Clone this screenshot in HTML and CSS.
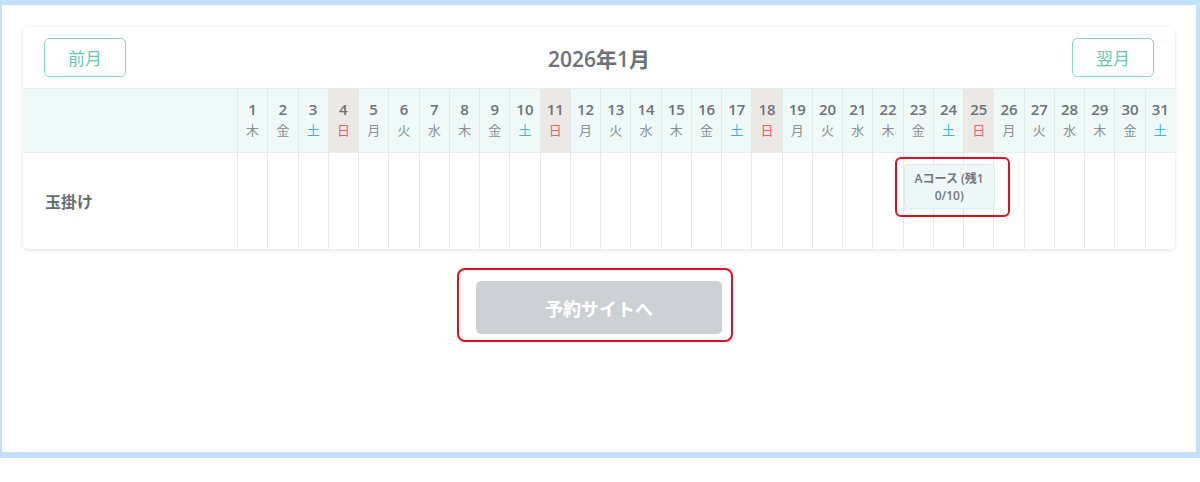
FILE: index.html
```html
<!DOCTYPE html>
<html lang="ja">
<head>
<meta charset="utf-8">
<title>カレンダー</title>
<link rel="stylesheet" href="styles.css">
</head>
<body>
<div class="frame">
  <div class="card">
    <div class="card-head">
      <button class="nav-btn">前月</button>
      <div class="title">2026年1月</div>
      <button class="nav-btn">翌月</button>
    </div>
    <div class="grid" id="grid">
      <div class="hcell label-head"></div>
    </div>
  </div>
  <div class="actions">
    <div class="btn-wrap">
      <button class="reserve-btn">予約サイトへ</button>
      <span class="mark mark-btn"></span>
    </div>
  </div>
</div>
<script>
(function(){
  var grid = document.getElementById('grid');
  var wd = ['日','月','火','水','木','金','土'];
  var first = 4; // 2026-01-01 is Thursday
  var html = '';
  for (var d = 1; d <= 31; d++) {
    var w = (first + d - 1) % 7;
    var cls = w === 0 ? ' sun' : (w === 6 ? ' sat' : '');
    html += '<div class="hcell day' + cls + '"><span class="num">' + d + '</span><span class="wd">' + wd[w] + '</span></div>';
  }
  html += '<div class="bcell label">玉掛け</div>';
  for (var d2 = 1; d2 <= 31; d2++) {
    if (d2 === 23) {
      html += '<div class="bcell slot"><div class="chip">Aコース (残1<br>0/10)</div><span class="mark mark-chip"></span></div>';
    } else {
      html += '<div class="bcell slot"></div>';
    }
  }
  grid.insertAdjacentHTML('beforeend', html);
})();
</script>
</body>
</html>
```

FILE: styles.css
```css
* { box-sizing: border-box; }
html, body { margin: 0; padding: 0; background: #ffffff; }
body {
  font-family: "Open Sans", "Noto Sans CJK JP", sans-serif;
  color: #666c70;
}
.frame {
  height: 458px;
  border-style: solid;
  border-color: #c3e0fb;
  border-width: 5px 4px 6px 2px;
  padding: 22px 21px 0 21px;
  background: #ffffff;
}
.card {
  background: #fff;
  border-radius: 6px;
  box-shadow: 0 1px 4px rgba(0, 0, 0, 0.12);
  overflow: hidden;
}
.card-head {
  height: 61px;
  display: flex;
  align-items: center;
  justify-content: space-between;
  padding: 0 21px;
}
.nav-btn {
  width: 82px;
  height: 39px;
  background: #fff;
  border: 1.5px solid #86d9c6;
  border-radius: 5px;
  color: #62c9b2;
  font-family: inherit;
  font-size: 17px;
  padding: 0;
}
.title {
  font-size: 21px;
  font-weight: 600;
  color: #6a7276;
}
.grid {
  display: grid;
  grid-template-columns: 214px repeat(31, 1fr);
  grid-template-rows: 65px 96px;
}
.hcell {
  background: #eef9f8;
  border-top: 1px solid #e3eeed;
  border-bottom: 1px solid #e3eeed;
}
.day {
  border-left: 1px solid #e0eceb;
  display: flex;
  flex-direction: column;
  align-items: center;
  padding-top: 11px;
}
.day.sun { background: #ebe8e6; }
.num {
  font-size: 15px;
  font-weight: 600;
  color: #6d7376;
  line-height: 19px;
}
.wd {
  font-size: 13px;
  color: #8a8f92;
  line-height: 18px;
  margin-top: 2px;
}
.sat .wd { color: #3bb6d3; }
.sun .wd { color: #e8606e; }
.bcell {
  background: #fff;
}
.label {
  display: flex;
  align-items: center;
  padding-left: 22px;
  font-size: 16px;
  font-weight: 600;
  color: #666d71;
}
.slot {
  border-left: 1px solid #e8e8e8;
  position: relative;
}
.chip {
  position: absolute;
  left: 0;
  top: 11px;
  width: 91px;
  height: 45px;
  z-index: 1;
  background: #eef8f8;
  border: 1px solid #dcebea;
  border-radius: 4px;
  font-size: 12px;
  font-weight: 600;
  color: #70767a;
  line-height: 17px;
  text-align: center;
  padding-top: 5px;
}
.mark {
  position: absolute;
  border: 2px solid #e0101e;
  pointer-events: none;
  z-index: 2;
}
.mark-chip {
  left: -9px;
  top: 4px;
  width: 115px;
  height: 60px;
  border-radius: 6px;
}
.actions {
  display: flex;
  justify-content: center;
  padding-top: 32px;
}
.btn-wrap {
  position: relative;
}
.reserve-btn {
  display: block;
  width: 246px;
  height: 53px;
  background: #cdd1d6;
  border: none;
  border-radius: 5px;
  color: #ffffff;
  font-family: inherit;
  font-size: 18px;
  font-weight: 700;
  padding: 0;
}
.mark-btn {
  left: -19px;
  top: -13px;
  width: 276px;
  height: 74px;
  border-radius: 8px;
}
```
